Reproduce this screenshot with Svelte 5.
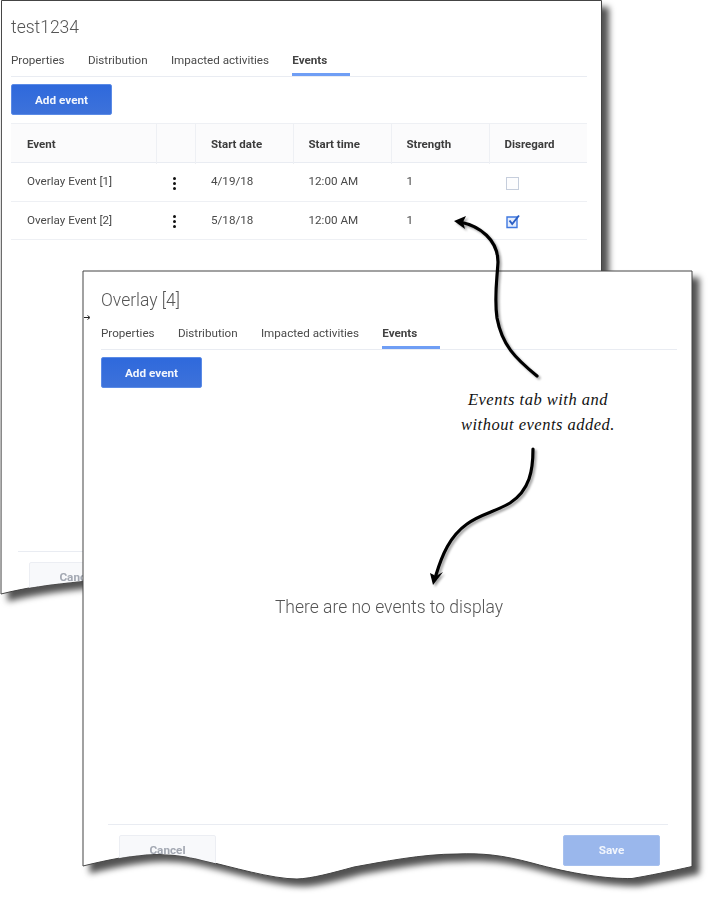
<script>
  const tabs = ['Properties', 'Distribution', 'Impacted activities', 'Events'];
  const cols = ['Event', '', 'Start date', 'Start time', 'Strength', 'Disregard'];
  const rows = [
    { name: 'Overlay Event [1]', date: '4/19/18', time: '12:00 AM', strength: '1', off: true },
    { name: 'Overlay Event [2]', date: '5/18/18', time: '12:00 AM', strength: '1', off: false }
  ];
</script>

{#snippet header(title)}
  <h1>{title}</h1>
  <nav class="tabs">
    {#each tabs as t}
      <span class="tab" class:active={t === 'Events'}>{t}</span>
    {/each}
  </nav>
  <button class="primary">Add event</button>
{/snippet}

{#snippet footer()}
  <footer>
    <button class="cancel">Cancel</button>
    <button class="save">Save</button>
  </footer>
{/snippet}

<div class="canvas">
  <section class="window w1">
    <svg class="frame" width="711" height="899" aria-hidden="true">
      <path d="M1.5 .5H601.5V575C500 590 300 585 230 578C170 575 110 578 82 581C50 584 25 588 1 594Z" />
    </svg>
    <div class="content c1">
      {@render header('test1234')}
      <div class="table">
        <div class="row head">
          {#each cols as c}<div class="cell">{c}</div>{/each}
        </div>
        {#each rows as r}
          <div class="row">
            <div class="cell">{r.name}</div>
            <div class="cell kebab"><i></i><i></i><i></i></div>
            <div class="cell">{r.date}</div>
            <div class="cell">{r.time}</div>
            <div class="cell">{r.strength}</div>
            <div class="cell check">
              {#if r.off}
                <span class="box"></span>
              {:else}
                <svg width="16" height="15" viewBox="0 0 16 15">
                  <path d="M1 3H11V13.500H1Z" fill="#e6eefc" stroke="#3f78e0" stroke-width="1.4" />
                  <path d="M3.5 6.5L6.2 10L13 1.5" fill="none" stroke="#2b5fc4" stroke-width="2" />
                </svg>
              {/if}
            </div>
          </div>
        {/each}
      </div>
      <div class="spacer"></div>
      {@render footer()}
    </div>
  </section>

  <section class="window w2">
    <svg class="frame" width="711" height="899" aria-hidden="true">
      <path d="M1 1H610V596.5C590 601 565 606 550 608.500C525 609 490 604 450 593C420 585 400 583 375 584C340 584 300 592 272 597C250 603 230 608.500 215 609C190 609 150 597 120 590C105 586 90 584 72 584C50 585 25 590 1 596Z" />
    </svg>
    <div class="content c2">
      <svg class="pointer" width="7" height="7" viewBox="0 0 7 7" aria-hidden="true">
        <path d="M0 3.500H5M3.500 1.500L6 3.500L3.500 5.500" fill="none" stroke="#222" stroke-width="1" />
      </svg>
      {@render header('Overlay [4]')}
      <p class="empty">There are no events to display</p>
      {@render footer()}
    </div>
  </section>

  <svg class="arrows" width="711" height="899" aria-hidden="true">
    <g fill="none" stroke="#000" stroke-width="3.2" stroke-linecap="round">
      <path d="M537 376C515 358 502 345 497 318C494 298 497 280 498 262C498 240 480 226 460 222" />
      <path d="M533 449C533 470 530 490 510 503C495 512 480 514 467 524C450 536 442 555 436 575" />
    </g>
    <path d="M454 221L466 216L463 222L465 229Z" fill="#000" />
    <path d="M433 585L430 573L436 576L443 572Z" fill="#000" />
  </svg>

  <p class="note">Events tab with and<br />without events added.</p>
</div>

<style>
  :global(body) {
    margin: 0;
    background: #fff;
  }
  .canvas {
    position: relative;
    width: 711px;
    height: 899px;
    overflow: hidden;
    font-family: Roboto, sans-serif;
    color: #4a4a4a;
  }
  .window {
    position: absolute;
    inset: 0;
    pointer-events: none;
  }
  .w2 {
    left: 82px;
    top: 270px;
  }
  .frame {
    position: absolute;
    left: 0;
    top: 0;
    overflow: visible;
    filter: drop-shadow(7px 7px 3px rgba(0, 0, 0, 0.68));
  }
  .frame path {
    fill: #fff;
    stroke: #444;
    stroke-width: 1;
  }
  .content {
    position: relative;
    display: flex;
    flex-direction: column;
    align-items: flex-start;
    box-sizing: border-box;
    filter: blur(0.35px);
  }
  .c1 {
    width: 602px;
    height: 600px;
    padding: 17px 15px 0 11px;
    clip-path: path('M2 1H601V575C500 590 300 585 230 578C170 575 110 578 82 581C50 584 25 588 2 593Z');
  }
  .c2 {
    width: 610px;
    height: 610px;
    padding: 20px 15px 0 19px;
    clip-path: path('M1 1H610V596C590 601 565 606 550 608C525 609 490 604 450 593C420 585 400 583 375 584C340 584 300 592 272 597C250 603 230 608 215 609C190 609 150 597 120 590C105 586 90 584 72 584C50 585 25 590 1 595Z');
  }
  .pointer {
    position: absolute;
    left: 2px;
    top: 44px;
  }
  h1 {
    margin: 0;
    font-size: 17.500px;
    line-height: 21px;
    font-weight: 300;
    color: #555;
  }
  .tabs {
    align-self: stretch;
    display: flex;
    gap: 23.300px;
    margin-top: 14px;
    height: 24px;
    border-bottom: 1px solid #e9ecf2;
    box-sizing: content-box;
  }
  .tab {
    font-size: 11.650px;
    line-height: 17px;
    height: 24px;
    box-sizing: border-box;
  }
  .tab.active {
    font-weight: 700;
    min-width: 58px;
    color: #444;
    border-bottom: 3px solid #6f9ef5;
  }
  button {
    font-family: Roboto, sans-serif;
    font-size: 11.750px;
    font-weight: 700;
    line-height: 27px;
    border-radius: 2px;
    height: 31px;
    padding: 0;
  }
  .primary {
    width: 101px;
    margin-top: 7px;
    line-height: 31px;
    color: #f2f6fd;
    border: 1px solid #5b8be6;
    background: linear-gradient(#2f69dc, #3d72da);
  }
  .table {
    align-self: stretch;
    margin-top: 8px;
    border-top: 1px solid #eef0f4;
  }
  .row {
    display: grid;
    grid-template-columns: 146px 39px 97.500px 98px 98px 97.500px;
    height: 37.500px;
    box-sizing: content-box;
    border-bottom: 1px solid #eef0f4;
  }
  .head {
    height: 38px;
    background: #fbfbfc;
    font-weight: 700;
    color: #3c3c3c;
    border-bottom-color: #e9ecf2;
  }
  .cell {
    padding-left: 16px;
    font-size: 11.650px;
    line-height: 36px;
    box-sizing: border-box;
  }
  .cell:nth-child(n + 3) {
    padding-left: 15px;
  }
  .head .cell {
    font-size: 11.500px;
    line-height: 40px;
    border-right: 1px solid #eef0f4;
  }
  .head .cell:last-child {
    border-right: none;
  }
  .kebab {
    display: flex;
    flex-direction: column;
    align-items: center;
    justify-content: center;
    gap: 2px;
    padding: 3px 0 0;
    margin-left: -5px;
  }
  .kebab i {
    width: 3px;
    height: 3px;
    border-radius: 50%;
    background: #111;
  }
  .row .check {
    display: flex;
    align-items: center;
    padding: 3px 0 0 16px;
  }
  .box {
    width: 11px;
    height: 11px;
    border: 1px solid #c6cedc;
    background: #fdfdfe;
  }
  .spacer {
    flex: 1;
  }
  .empty {
    align-self: stretch;
    flex: 1;
    margin: 0;
    padding-top: 2px;
    display: flex;
    align-items: center;
    justify-content: center;
    font-size: 17.500px;
    font-weight: 300;
    color: #555;
  }
  footer {
    display: flex;
    justify-content: space-between;
    box-sizing: border-box;
    height: 56px;
    border-top: 1px solid #e9ecf2;
    padding: 10px 8px 0 11px;
  }
  .c1 footer {
    align-self: stretch;
    margin: 0 0 -7px 7px;
    height: 56px;
  }
  .c2 footer {
    width: 560px;
    margin-left: 7px;
  }
  .cancel {
    width: 97px;
    color: #a3a8b2;
    border: 1px solid #eceef3;
    background: #f8f9fb;
  }
  .save {
    width: 97px;
    color: #f2f6fd;
    border: 1px solid #a6c0ee;
    background: #9ab7ec;
  }
  .arrows {
    position: absolute;
    left: 0;
    top: 0;
    filter: drop-shadow(2px 2px 1px rgba(0, 0, 0, 0.35));
  }
  .note {
    position: absolute;
    left: 438px;
    top: 387px;
    width: 200px;
    margin: 0;
    text-align: center;
    font-family: "Liberation Serif", serif;
    font-style: italic;
    font-size: 16.500px;
    line-height: 25px;
    color: #111;
    letter-spacing: 0.5px;
  }
</style>
